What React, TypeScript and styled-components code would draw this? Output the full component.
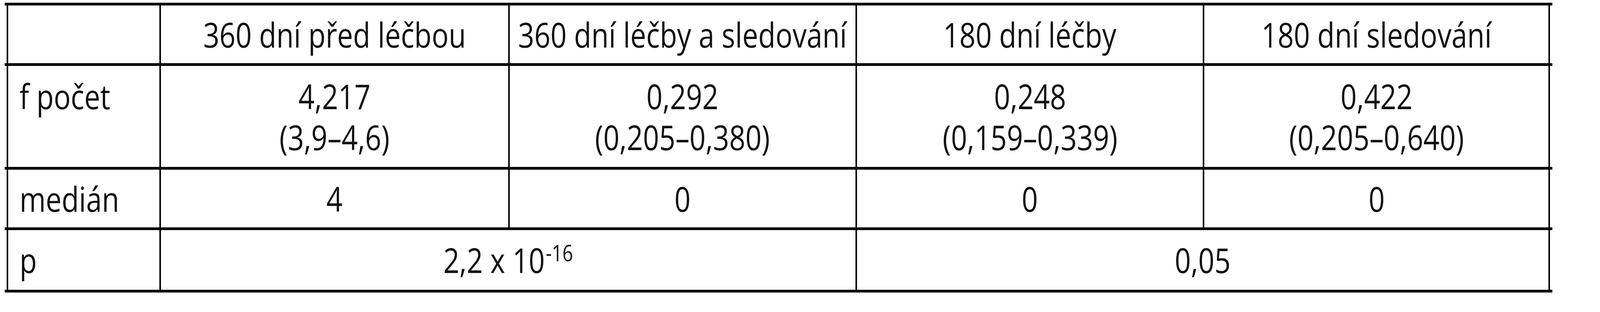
import React from "react";
import styled, { createGlobalStyle } from "styled-components";

/* Horizontal sizes are reference pixels mapped onto the viewport width (4975 wide reference). */
const u = (n: number) => `calc(${n} * 100vw / 4975)`;

const GlobalStyle = createGlobalStyle`
  html, body {
    margin: 0;
    padding: 0;
    background: #ffffff;
    overflow: hidden;
  }
  body {
    font-family: "Open Sans", "Noto Sans", "Liberation Sans", sans-serif;
    color: #111111;
  }
`;

const Page = styled.div`
  width: 100vw;
  height: 800px;
`;

const Table = styled.div`
  display: flex;
  flex-direction: column;
  width: ${u(4813)};
  margin: 7px 0 0 ${u(14)};
  border-bottom: 7px solid #000;
`;

const Row = styled.div<{ $height: number }>`
  display: grid;
  grid-template-columns: ${u(474)} ${u(1085)} ${u(1080)} ${u(1080)} ${u(1080)};
  height: ${(p) => p.$height}px;
  padding: 0 ${u(7)};
  border-top: 7px solid #000;
  box-sizing: content-box;
`;

const Cell = styled.div<{ $span?: number; $first?: boolean; $last?: boolean }>`
  box-sizing: border-box;
  grid-column: span ${(p) => p.$span ?? 1};
  border-left: ${u(6)} solid #000;
  border-right: ${(p) => (p.$last ? `${u(6)} solid #000` : "none")};
  display: flex;
  flex-direction: column;
  justify-content: center;
  align-items: ${(p) => (p.$first ? "flex-start" : "center")};
  padding-left: ${(p) => (p.$first ? u(35) : "0")};
  font-size: 88px;
  line-height: 105px;
  white-space: nowrap;
  min-width: 0;
`;

const Text = styled.span<{ $left?: boolean }>`
  display: flex;
  flex-direction: column;
  align-items: ${(p) => (p.$left ? "flex-start" : "center")};
  flex-shrink: 0;
  transform: scaleX(var(--sx, 1));
  transform-origin: ${(p) => (p.$left ? "left center" : "center center")};
`;

const Line = styled.span`
  display: block;
`;

const Sup = styled.span`
  font-size: 58px;
  line-height: 0;
  vertical-align: 30px;
  margin-left: 3px;
`;

type Value = string | string[];

const header = [
  "360 dní před léčbou",
  "360 dní léčby a sledování",
  "180 dní léčby",
  "180 dní sledování",
];

const counts: Value[] = [
  ["4,217", "(3,9–4,6)"],
  ["0,292", "(0,205–0,380)"],
  ["0,248", "(0,159–0,339)"],
  ["0,422", "(0,205–0,640)"],
];

const medians = ["4", "0", "0", "0"];

const lines = (v: Value) => (Array.isArray(v) ? v : [v]);

export default function App() {
  const sx =
    typeof window !== "undefined" && window.innerWidth > 0
      ? window.innerWidth / 4975
      : 1;

  return (
    <>
      <GlobalStyle />
      <Page style={{ ["--sx" as string]: sx } as React.CSSProperties}>
        <Table>
          <Row $height={148}>
            <Cell $first />
            {header.map((h, i) => (
              <Cell key={h} $last={i === header.length - 1}>
                <Text>
                  <Line>{h}</Line>
                </Text>
              </Cell>
            ))}
          </Row>
          <Row $height={259}>
            <Cell $first>
              <Text $left>
                <Line>f počet</Line>
                <Line>&nbsp;</Line>
              </Text>
            </Cell>
            {counts.map((c, i) => (
              <Cell key={i} $last={i === counts.length - 1}>
                <Text>
                  {lines(c).map((l) => (
                    <Line key={l}>{l}</Line>
                  ))}
                </Text>
              </Cell>
            ))}
          </Row>
          <Row $height={148}>
            <Cell $first>
              <Text $left>
                <Line>medián</Line>
              </Text>
            </Cell>
            {medians.map((m, i) => (
              <Cell key={i} $last={i === medians.length - 1}>
                <Text>
                  <Line>{m}</Line>
                </Text>
              </Cell>
            ))}
          </Row>
          <Row $height={153}>
            <Cell $first>
              <Text $left>
                <Line>p</Line>
              </Text>
            </Cell>
            <Cell $span={2}>
              <Text>
                <Line>
                  2,2 x 10<Sup>-16</Sup>
                </Line>
              </Text>
            </Cell>
            <Cell $span={2} $last>
              <Text>
                <Line>0,05</Line>
              </Text>
            </Cell>
          </Row>
        </Table>
      </Page>
    </>
  );
}
